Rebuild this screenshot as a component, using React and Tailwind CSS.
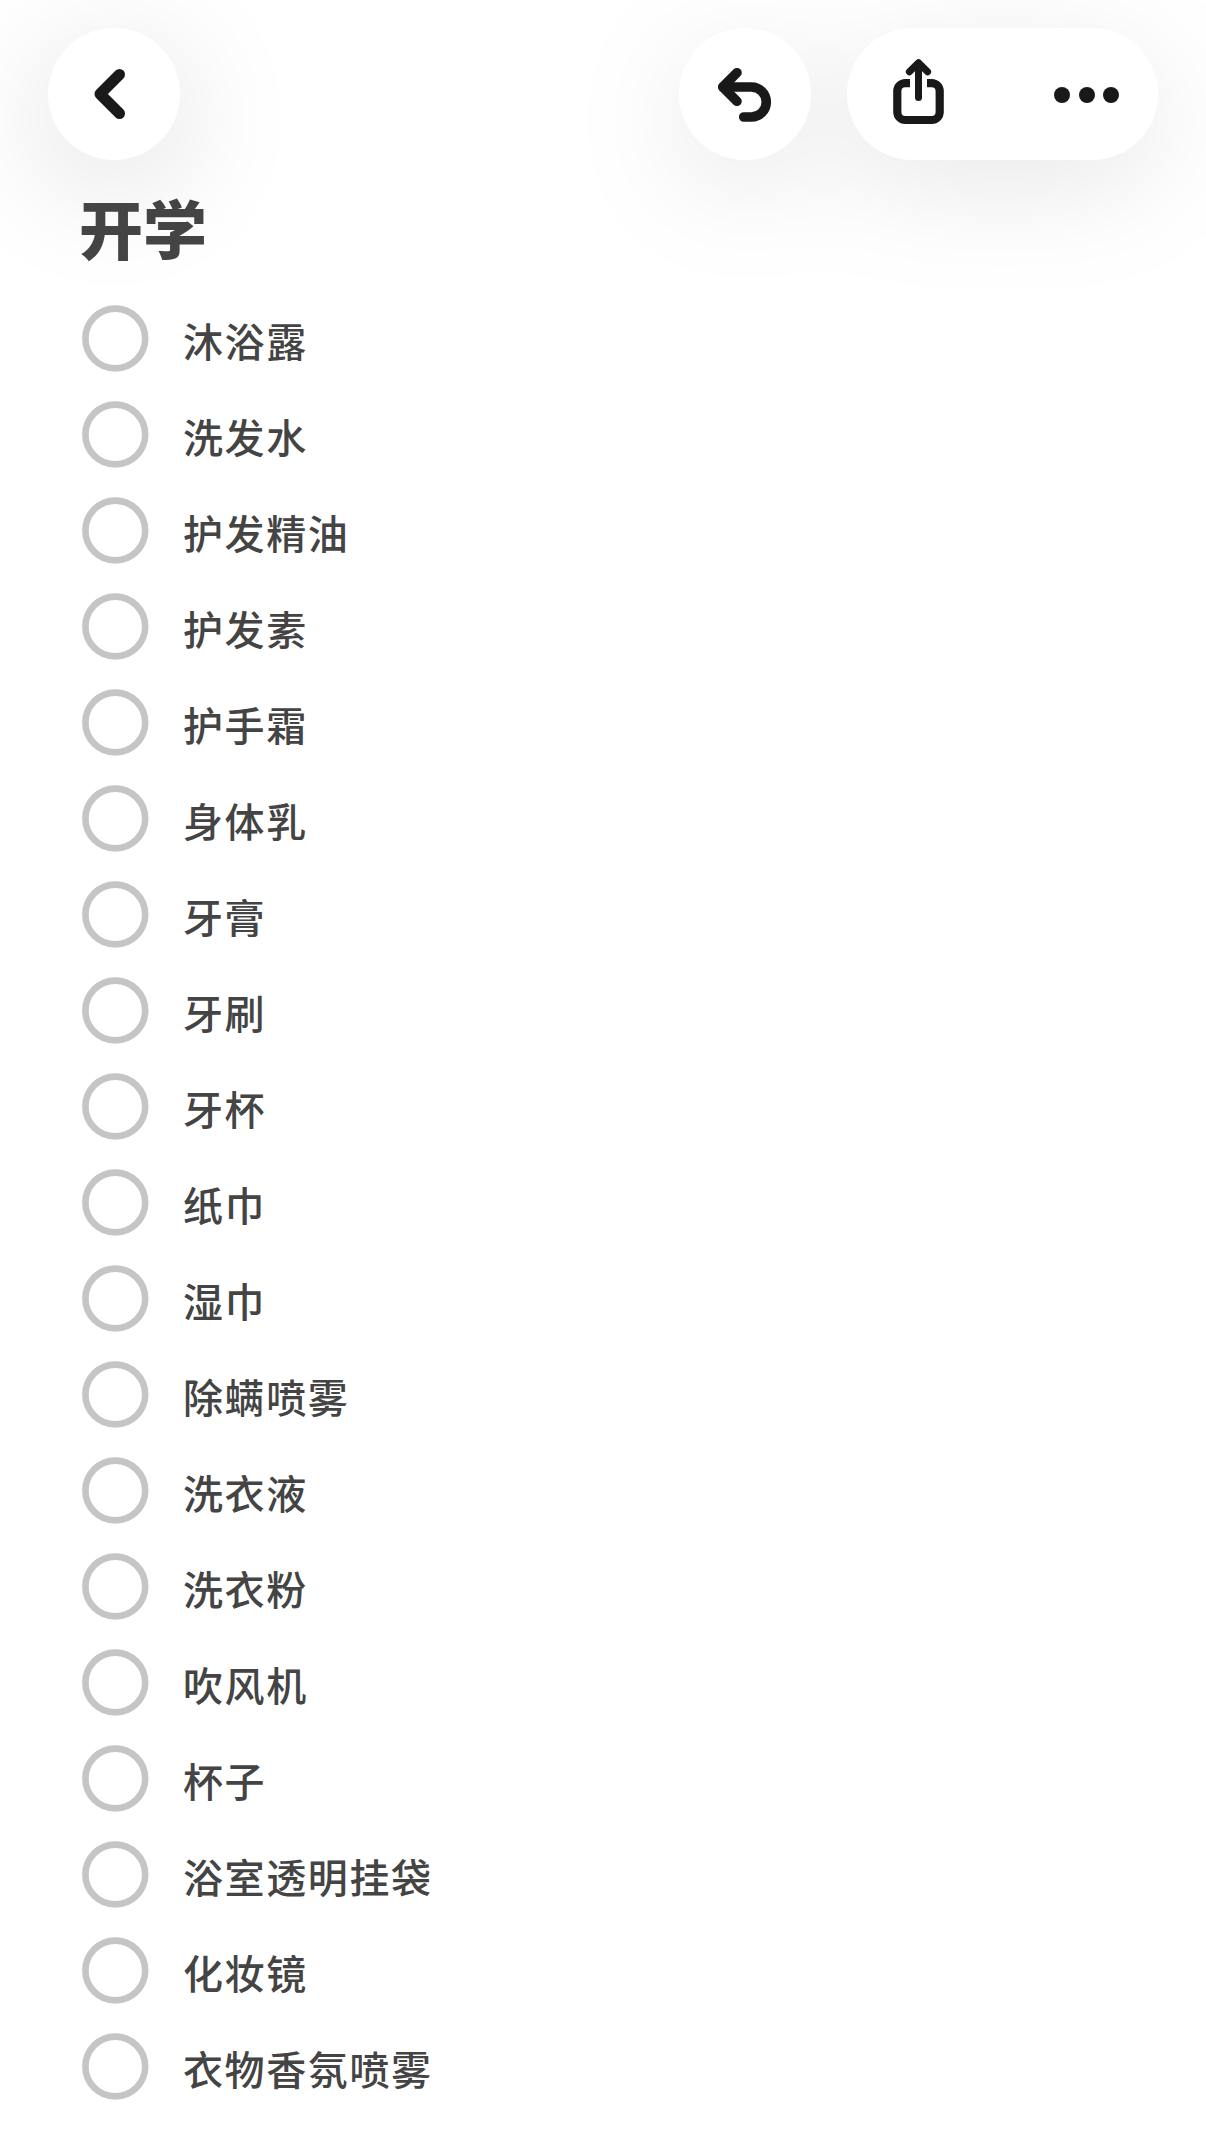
const items = [
  '沐浴露', '洗发水', '护发精油', '护发素', '护手霜', '身体乳', '牙膏', '牙刷', '牙杯', '纸巾',
  '湿巾', '除螨喷雾', '洗衣液', '洗衣粉', '吹风机', '杯子', '浴室透明挂袋', '化妆镜', '衣物香氛喷雾',
];

function Icon({ children, className, ...rest }) {
  return (
    <svg
      className={className}
      fill="none"
      stroke="#191919"
      strokeLinecap="round"
      strokeLinejoin="round"
      aria-hidden="true"
      {...rest}
    >
      {children}
    </svg>
  );
}

function Header() {
  return (
    <header className="flex h-[188px] items-start px-12 pt-7">
      <button aria-label="返回" className="size-[132px] rounded-full bg-white shadow-[0_24px_120px_12px_rgba(0,0,0,0.1)]">
        <Icon className="size-[132px]" viewBox="0 0 132 132" strokeWidth="11">
          <path d="M71.5 46.5 52 66l19.5 19.5" />
        </Icon>
      </button>
      <div className="ml-auto flex gap-9 drop-shadow-[0_26px_56px_rgba(0,0,0,0.09)]">
        <button aria-label="撤销" className="size-[132px] rounded-full bg-white">
          <Icon className="size-[132px]" viewBox="0 0 132 132" strokeWidth="9.6">
            <path d="M58 44.7 43.8 59 58 73.3" />
            <path d="M44 59h28.3a15 15 0 0 1 0 30h-7.6" />
          </Icon>
        </button>
        <div className="flex h-[132px] w-[311px] justify-between rounded-full bg-white">
          <button aria-label="分享" className="h-[132px] w-[144px]">
            <Icon className="h-[132px] w-[144px]" viewBox="0 -0.5 144 132" strokeWidth="8.2">
              <path strokeLinecap="butt" d="M63 54.6h-4.7a8 8 0 0 0-8 8v20.9a8 8 0 0 0 8 8h26.4a8 8 0 0 0 8-8V62.6a8 8 0 0 0-8-8H80" />
              <path strokeWidth="7" d="M71.5 35v34M62.4 43.3l9.1-9.1 9.1 9.1" />
            </Icon>
          </button>
          <button aria-label="更多" className="flex h-[132px] items-center gap-[8.5px] pt-[2px] pr-[39px]">
            <span className="size-4 rounded-full bg-[#191919]" />
            <span className="size-4 rounded-full bg-[#191919]" />
            <span className="size-4 rounded-full bg-[#191919]" />
          </button>
        </div>
      </div>
    </header>
  );
}

export default function App() {
  return (
    <div className="h-[2151px] w-full overflow-hidden bg-white font-['Noto_Sans_CJK_SC',sans-serif] text-[#444444]" lang="zh-CN">
      <Header />
      <main className="pl-[82px]">
        <h1 className="-ml-[3px] h-[102px] text-[64px] leading-[77px] font-black">开学</h1>
        <ul>
          {items.map((name) => (
            <li key={name} className="flex h-24 items-center">
              <svg className="size-[67px]" viewBox="0 0 67 67" fill="none" aria-hidden="true">
                <circle cx="33.3" cy="33.5" r="29.9" stroke="#c5c5c7" strokeWidth="6.6" />
              </svg>
              <span className="ml-[34px] pt-[4px] text-[40px] leading-[60px] font-medium tracking-[1.6px]">{name}</span>
            </li>
          ))}
        </ul>
      </main>
    </div>
  );
}
